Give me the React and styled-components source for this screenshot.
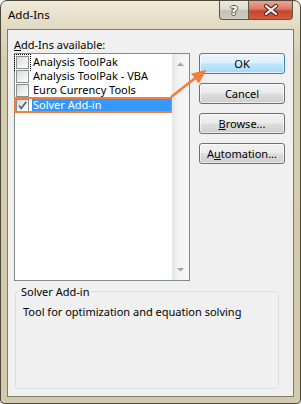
import React from 'react';
import styled, {createGlobalStyle} from 'styled-components';

const ADDINS = [
  {id: 'atp', name: 'Analysis ToolPak', checked: false},
  {id: 'vba', name: 'Analysis ToolPak - VBA', checked: false},
  {id: 'euro', name: 'Euro Currency Tools', checked: false},
  {id: 'solver', name: 'Solver Add-in', checked: true},
];

const BUTTONS = [
  {id: 'ok', label: 'OK', primary: true},
  {id: 'cancel', label: 'Cancel'},
  {id: 'browse', label: 'Browse...', key: 'B'},
  {id: 'auto', label: 'Automation...', key: 'u'},
];

const Underlined = ({text, letter}) => {
  if (!letter) return text;
  const i = text.indexOf(letter);
  return (
      <>
        {text.slice(0, i)}
        <U>{letter}</U>
        {text.slice(i + 1)}
      </>
  );
};

const App = () => {
  return (
      <>
        <GlobalStyle/>
        <Window>
          <TitleBar>
            <Title>Add-Ins</Title>
            <Captions>
              <HelpButton>?</HelpButton>
              <CloseButton>
                <svg width="16" height="12" viewBox="0 0 16 12">
                  <path d="M3 2 L13 10 M13 2 L3 10" stroke="#5a2a20"
                        strokeWidth="4.2" strokeLinecap="round"/>
                  <path d="M3 2 L13 10 M13 2 L3 10" stroke="#fff"
                        strokeWidth="2.2" strokeLinecap="round"/>
                </svg>
              </CloseButton>
            </Captions>
          </TitleBar>
          <Client>
            <Label><U>A</U>dd-Ins available:</Label>
            <Main>
              <ListBox>
                <Items>
                  {ADDINS.map((item, index) => (
                      <Row key={item.id} $selected={item.checked}>
                        <Check $focused={index === 0}>
                          {item.checked && (
                              <svg width="11" height="11" viewBox="0 0 11 11">
                                <path d="M2 5.5 L4.3 8.3 L9.3 1.8"
                                      fill="none" stroke="#4a64a0"
                                      strokeWidth="1.7"/>
                              </svg>
                          )}
                        </Check>
                        <ItemText $selected={item.checked}>{item.name}</ItemText>
                      </Row>
                  ))}
                </Items>
                <ScrollBar>
                  <svg width="17" height="17" viewBox="0 0 17 17">
                    <path d="M5 10 L8.5 6.5 L12 10 Z" fill="#a3a3a3"/>
                  </svg>
                  <svg width="17" height="17" viewBox="0 0 17 17">
                    <path d="M5 7 L8.5 10.5 L12 7 Z" fill="#a3a3a3"/>
                  </svg>
                </ScrollBar>
              </ListBox>
              <ButtonColumn>
                {BUTTONS.map((btn) => (
                    <DialogButton key={btn.id} $primary={btn.primary}>
                      <Underlined text={btn.label} letter={btn.key}/>
                    </DialogButton>
                ))}
              </ButtonColumn>
              <Arrow width="210" height="60" viewBox="0 0 210 60">
                <line x1="157" y1="44" x2="182" y2="24.5" stroke="#f47d3a"
                      strokeWidth="2.6"/>
                <polygon points="192.5,17 184.8,30.5 177.2,20.6"
                         fill="#f47d3a"/>
              </Arrow>
            </Main>
            <GroupBox>
              <Legend>Solver Add-in</Legend>
              <Description>Tool for optimization and equation solving</Description>
            </GroupBox>
          </Client>
        </Window>
      </>
  );
};

export default App;

const GlobalStyle = createGlobalStyle`
  body {
    margin: 0;
    font-family: "Noto Sans", "DejaVu Sans", sans-serif;
    font-size: 11px;
    color: #000;
  }
`;

const Window = styled.div`
  width: 301px;
  height: 404px;
  box-sizing: border-box;
  border: 1px solid #4d4839;
  border-radius: 7px 7px 4px 4px;
  background: linear-gradient(to bottom, #efead9 0, #e0d9c2 28px, #d5cdb0 60px, #d3caad 100%);
  padding: 0 6px 6px 6px;
  display: flex;
  flex-direction: column;
  overflow: hidden;
`;

const TitleBar = styled.div`
  height: 28px;
  display: flex;
  align-items: center;
  padding-left: 1px;
`;

const Title = styled.div`
  font-size: 11.5px;
  line-height: 15px;
  margin-top: -1px;
`;

const Captions = styled.div`
  display: flex;
  align-self: flex-start;
  margin-left: auto;
  margin-right: 1px;
`;

const CaptionBase = styled.div`
  height: 19px;
  box-sizing: border-box;
  border: 1px solid #5b5547;
  border-top: none;
  display: flex;
  align-items: center;
  justify-content: center;
`;

const HelpButton = styled(CaptionBase)`
  width: 29px;
  border-right: none;
  border-radius: 0 0 0 4px;
  background: linear-gradient(to bottom, #ebe8de 0, #dedbd0 45%, #c3c0b3 55%, #cfccc0 100%);
  color: #fff;
  font-family: "DejaVu Sans", sans-serif;
  font-weight: bold;
  font-size: 13px;
  text-shadow: 1px 0 0 #55534a, -1px 0 0 #55534a, 0 1px 0 #55534a, 0 -1px 0 #55534a;
`;

const CloseButton = styled(CaptionBase)`
  width: 45px;
  border-radius: 0 0 4px 0;
  background: linear-gradient(to bottom, #e9a596 0, #da7a66 45%, #c6452d 55%, #d35a40 100%);
`;

const Client = styled.div`
  flex: 1;
  border: 1px solid #837c64;
  background: #f0f0f0;
  padding: 7px 8px 7px 6px;
  display: flex;
  flex-direction: column;
`;

const U = styled.span`
  text-decoration: underline;
`;

const Label = styled.div`
  line-height: 15px;
  margin-bottom: 1px;
`;

const Main = styled.div`
  position: relative;
  display: flex;
  align-items: flex-start;
  gap: 9px;
`;

const ListBox = styled.div`
  width: 176px;
  height: 228px;
  box-sizing: border-box;
  border: 1px solid #828790;
  background: #fff;
  display: flex;
`;

const Items = styled.div`
  flex: 1;
  padding-top: 1px;
`;

const Row = styled.div`
  height: 14px;
  display: flex;
  align-items: center;
  padding-left: 1px;
  margin-top: ${({$selected}) => ($selected ? '1px' : '0')};
  outline: ${({$selected}) => ($selected ? '2px solid #f47d3a' : 'none')};
  outline-offset: -1px;
`;

const Check = styled.span`
  width: 13px;
  height: 13px;
  box-sizing: border-box;
  border: 1px solid #8e8f8f;
  background: linear-gradient(135deg, #d8d8d8 0, #f1f1f1 60%, #fdfdfd 100%);
  display: flex;
  align-items: center;
  justify-content: center;
  outline: ${({$focused}) => ($focused ? '1px dotted #000' : 'none')};
  outline-offset: 1px;
`;

const ItemText = styled.span`
  flex: 1;
  margin-left: 3px;
  padding-left: 1px;
  line-height: 14px;
  height: 14px;
  white-space: nowrap;
  background: ${({$selected}) => ($selected ? '#3399ff' : 'transparent')};
  color: ${({$selected}) => ($selected ? '#fff' : '#000')};
`;

const ScrollBar = styled.div`
  width: 17px;
  background: linear-gradient(to right, #e6e6e6 0, #f3f3f3 40%, #f5f5f5 100%);
  display: flex;
  flex-direction: column;
  justify-content: space-between;
  padding: 2px 0 2px;
`;

const ButtonColumn = styled.div`
  display: flex;
  flex-direction: column;
  gap: 9px;
`;

const DialogButton = styled.button`
  width: 86px;
  height: 21px;
  box-sizing: border-box;
  padding: 0;
  font-family: inherit;
  font-size: 11px;
  line-height: 15px;
  color: #000;
  border: 1px solid ${({$primary}) => ($primary ? '#3c7fb1' : '#707070')};
  border-radius: 3px;
  background: ${({$primary}) => ($primary
      ? 'linear-gradient(to bottom, #eaf6fd 0, #d9f0fc 48%, #bee6fd 52%, #a7d9f5 100%)'
      : 'linear-gradient(to bottom, #f2f2f2 0, #ebebeb 48%, #dddddd 52%, #cfcfcf 100%)')};
  box-shadow: inset 0 0 0 1px rgba(255, 255, 255, 0.6);
`;

const Arrow = styled.svg`
  position: absolute;
  left: 0;
  top: 0;
  pointer-events: none;
`;

const GroupBox = styled.fieldset`
  flex: 1;
  margin: 3px 6px 0 1px;
  padding: 5px 4px 0 3px;
  border: 1px solid #d5dfe5;
  border-radius: 3px;
  min-width: 0;
`;

const Legend = styled.legend`
  padding: 0 2px;
  line-height: 15px;
`;

const Description = styled.div`
  margin-left: 4px;
  line-height: 15px;
`;
